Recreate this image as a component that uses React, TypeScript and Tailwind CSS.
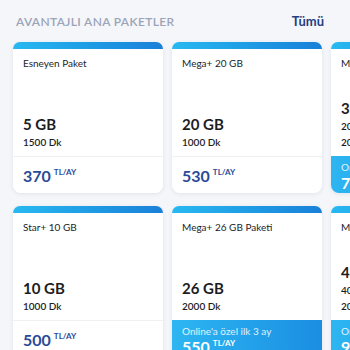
type Pkg = {
  title: string
  data: string
  lines: string[]
  price: string
  promo?: string
}

const rows: Pkg[][] = [
  [
    { title: 'Esneyen Paket', data: '5 GB', lines: ['1500 Dk'], price: '370' },
    { title: 'Mega+ 20 GB', data: '20 GB', lines: ['1000 Dk'], price: '530' },
    { title: 'Mega+ 30 GB', data: '30 GB', lines: ['2000 Dk', '2000 SMS'], price: '700', promo: "Online'a özel ilk 3 ay" },
  ],
  [
    { title: 'Star+ 10 GB', data: '10 GB', lines: ['1000 Dk'], price: '500' },
    { title: 'Mega+ 26 GB Paketi', data: '26 GB', lines: ['2000 Dk'], price: '550', promo: "Online'a özel ilk 3 ay" },
    { title: 'Mega+ 45 GB', data: '45 GB', lines: ['4000 Dk', '2000 SMS'], price: '900', promo: "Online'a özel ilk 3 ay" },
  ],
]

function PackageCard({ pkg }: { pkg: Pkg }) {
  return (
    <div className="w-[150px] shrink-0 rounded-[8px] shadow-[0_1px_4px_rgba(40,60,100,0.10)]">
      <div className="h-[7px] rounded-t-[8px] bg-gradient-to-r from-[#28b9f1] to-[#1a80d8]" />
      <div className="h-[107px] bg-white px-[10px] pt-[7px] pb-[6px] flex flex-col justify-between">
        <p className="text-[10px] leading-[14px] text-[#1d1d1f]">{pkg.title}</p>
        <div className="flex flex-col">
          <p className="text-[15px] leading-[19px] font-bold text-[#1d1d1f]">{pkg.data}</p>
          {pkg.lines.map((l) => (
            <p key={l} className="text-[10px] leading-[16px] font-semibold text-[#1d1d1f]">{l}</p>
          ))}
        </div>
      </div>
      {pkg.promo ? (
        <div className="h-[37px] rounded-b-[8px] bg-gradient-to-r from-[#2db6f2] to-[#1b8ee2] px-[10px] pt-[5px] flex flex-col">
          <p className="text-[10px] leading-[13px] text-white/85">{pkg.promo}</p>
          <p className="flex items-start text-white">
            <span className="text-[16px] leading-[18px] font-bold">{pkg.price}</span>
            <span className="ml-[3px] text-[8px] leading-[10px] font-bold">TL/AY</span>
          </p>
        </div>
      ) : (
        <div className="h-[37px] rounded-b-[8px] bg-white border-t border-[#eef0f4] px-[10px] pt-[10px]">
          <p className="flex items-start text-[#2a4a97]">
            <span className="text-[16px] leading-[18px] font-bold">{pkg.price}</span>
            <span className="ml-[3px] text-[8px] leading-[10px] font-bold">TL/AY</span>
          </p>
        </div>
      )}
    </div>
  )
}

export default function App() {
  return (
    <div className="w-[350px] h-[350px] overflow-hidden bg-[#f4f6f9]" style={{ fontFamily: 'Lato, "Open Sans", sans-serif' }}>
      <div className="flex items-center justify-between pl-[16px] pr-[26px] pt-[14px] h-[42px] pb-[12px]">
        <h2 className="text-[12px] font-semibold tracking-[0.03em] text-[#9ba4b8]">AVANTAJLI ANA PAKETLER</h2>
        <a className="text-[13px] font-bold text-[#253e83]">Tümü</a>
      </div>
      <div className="flex flex-col gap-[13px] pl-[13px]">
        {rows.map((row, i) => (
          <div key={i} className="flex gap-[9px]">
            {row.map((pkg) => (
              <PackageCard key={pkg.title} pkg={pkg} />
            ))}
          </div>
        ))}
      </div>
    </div>
  )
}
